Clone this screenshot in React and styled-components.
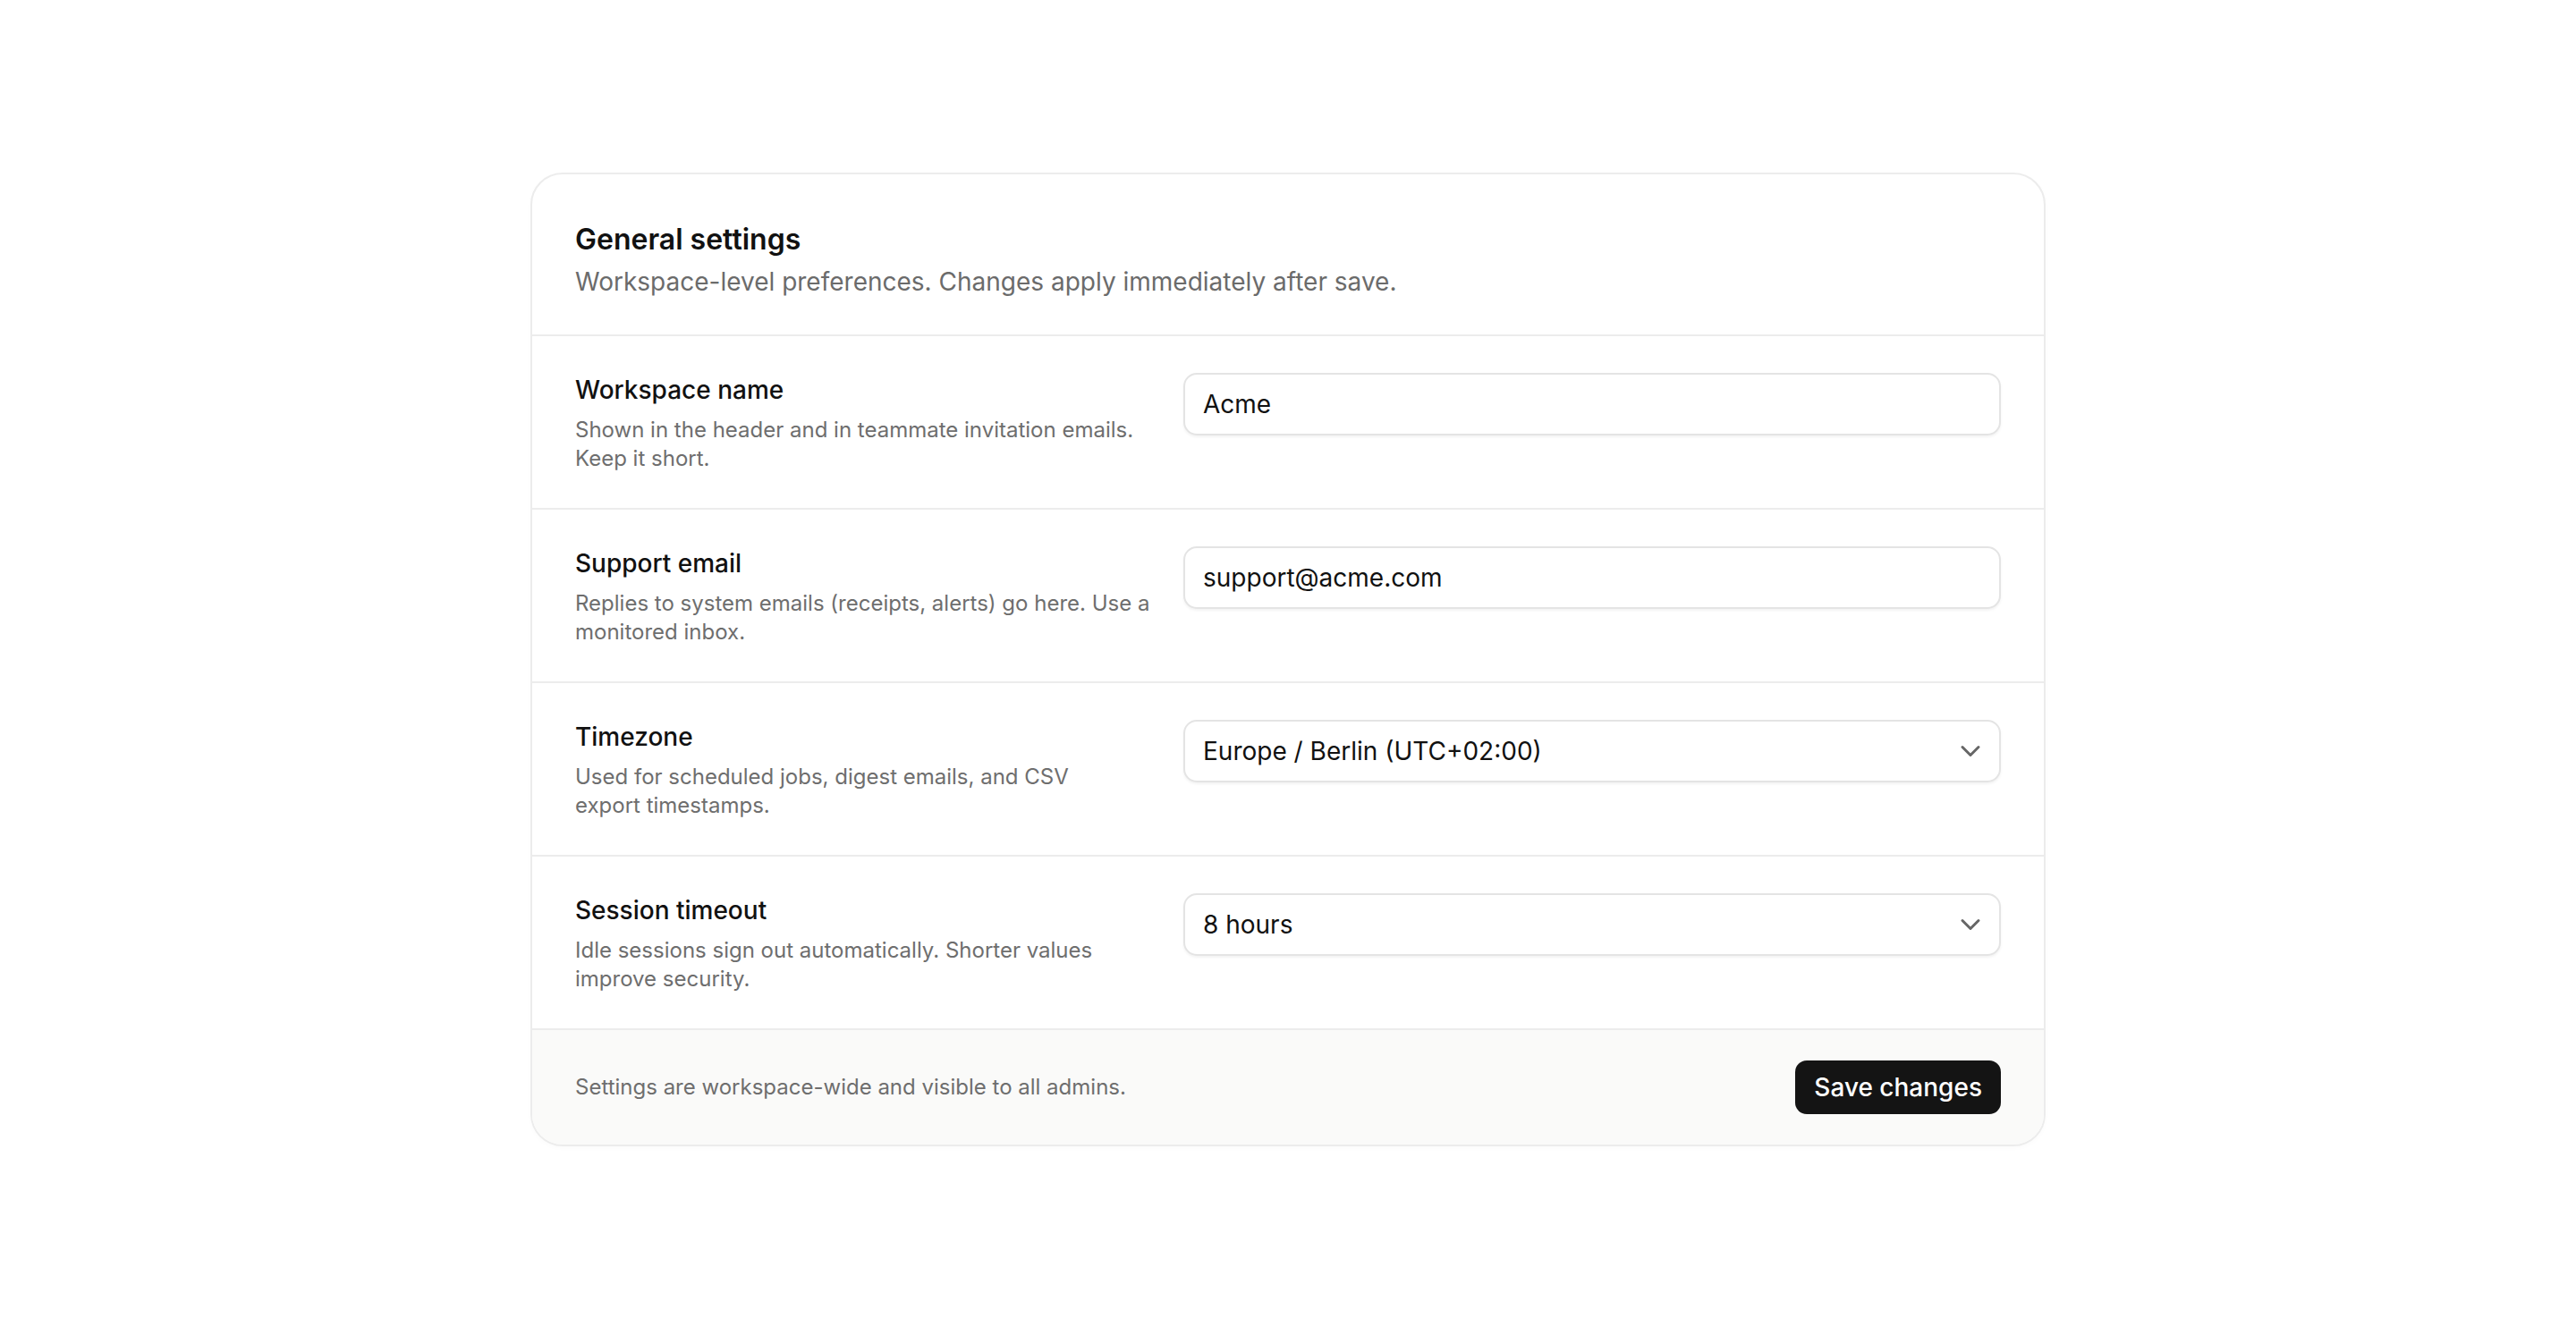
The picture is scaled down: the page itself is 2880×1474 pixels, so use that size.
import React from "react";
import styled, { createGlobalStyle } from "styled-components";
import { ChevronDown } from "lucide-react";

const GlobalStyle = createGlobalStyle`
  * { box-sizing: border-box; }
  html, body {
    margin: 0;
    padding: 0;
    background: #ffffff;
    font-family: Inter, "Noto Sans", "Liberation Sans", sans-serif;
    color: #111111;
  }
`;

const fields = [
  {
    id: "name",
    label: "Workspace name",
    help: "Shown in the header and in teammate invitation emails. Keep it short.",
    type: "input",
    value: "Acme",
  },
  {
    id: "email",
    label: "Support email",
    help: "Replies to system emails (receipts, alerts) go here. Use a monitored inbox.",
    type: "input",
    value: "support@acme.com",
  },
  {
    id: "tz",
    label: "Timezone",
    help: "Used for scheduled jobs, digest emails, and CSV export timestamps.",
    type: "select",
    value: "Europe / Berlin (UTC+02:00)",
  },
  {
    id: "session",
    label: "Session timeout",
    help: "Idle sessions sign out automatically. Shorter values improve security.",
    type: "select",
    value: "8 hours",
  },
];

export default function App() {
  return (
    <>
      <GlobalStyle />
      <Page>
        <Card>
          <Header>
            <Title>General settings</Title>
            <Subtitle>
              Workspace-level preferences. Changes apply immediately after save.
            </Subtitle>
          </Header>

          {fields.map((f) => (
            <Row key={f.id}>
              <LabelCol>
                <Label htmlFor={f.id}>{f.label}</Label>
                <Help>{f.help}</Help>
              </LabelCol>
              {f.type === "input" ? (
                <TextInput id={f.id} defaultValue={f.value} />
              ) : (
                <Select id={f.id} type="button">
                  <span>{f.value}</span>
                  <ChevronDown size={36} strokeWidth={2} color="#666666" />
                </Select>
              )}
            </Row>
          ))}

          <Footer>
            <FooterNote>Settings are workspace-wide and visible to all admins.</FooterNote>
            <SaveButton type="button">Save changes</SaveButton>
          </Footer>
        </Card>
      </Page>
    </>
  );
}

const Page = styled.div`
  min-height: 100vh;
  display: flex;
  justify-content: center;
  padding-top: 193px;
`;

const Card = styled.div`
  width: 1694px;
  align-self: flex-start;
  border: 2px solid #ececec;
  border-radius: 36px;
  overflow: hidden;
  background: #ffffff;
  box-shadow: 0 2px 6px rgba(0, 0, 0, 0.02);
`;

const Header = styled.div`
  padding: 52px 48px 39px;
  border-bottom: 2px solid #ececec;
`;

const Title = styled.h1`
  margin: 0;
  font-size: 32px;
  line-height: 42px;
  font-weight: 600;
  color: #111111;
`;

const Subtitle = styled.p`
  margin: 6px 0 0;
  font-size: 28px;
  line-height: 40px;
  color: #6b6b6b;
`;

const Row = styled.div`
  display: grid;
  grid-template-columns: 648px 1fr;
  column-gap: 32px;
  align-items: start;
  padding: 41px 48px 39px;
  border-bottom: 2px solid #ececec;
`;

const LabelCol = styled.div`
  display: flex;
  flex-direction: column;
  gap: 10px;
`;

const Label = styled.label`
  font-size: 28px;
  line-height: 38px;
  font-weight: 500;
  color: #111111;
`;

const Help = styled.div`
  font-size: 24px;
  line-height: 32px;
  color: #6e6e6e;
  text-wrap: pretty;
`;

const fieldBox = `
  width: 100%;
  height: 70px;
  border: 2px solid #e4e4e4;
  border-radius: 15px;
  background: #ffffff;
  box-shadow: 0 2px 3px rgba(0, 0, 0, 0.05);
  font-family: Inter, "Noto Sans", "Liberation Sans", sans-serif;
  font-size: 28px;
  color: #111111;
`;

const TextInput = styled.input`
  ${fieldBox}
  padding: 0 20px;
  outline: none;
`;

const Select = styled.button`
  ${fieldBox}
  display: flex;
  align-items: center;
  justify-content: space-between;
  padding: 0 14px 0 20px;
  text-align: left;
  cursor: pointer;
`;

const Footer = styled.div`
  display: flex;
  align-items: center;
  justify-content: space-between;
  padding: 34px 48px;
  background: #fafaf9;
`;

const FooterNote = styled.div`
  font-size: 24px;
  line-height: 32px;
  color: #6e6e6e;
`;

const SaveButton = styled.button`
  height: 60px;
  padding: 0 21px;
  border: none;
  border-radius: 13px;
  background: #141414;
  color: #ffffff;
  font-family: Inter, "Noto Sans", "Liberation Sans", sans-serif;
  font-size: 28px;
  font-weight: 500;
  cursor: pointer;
`;
